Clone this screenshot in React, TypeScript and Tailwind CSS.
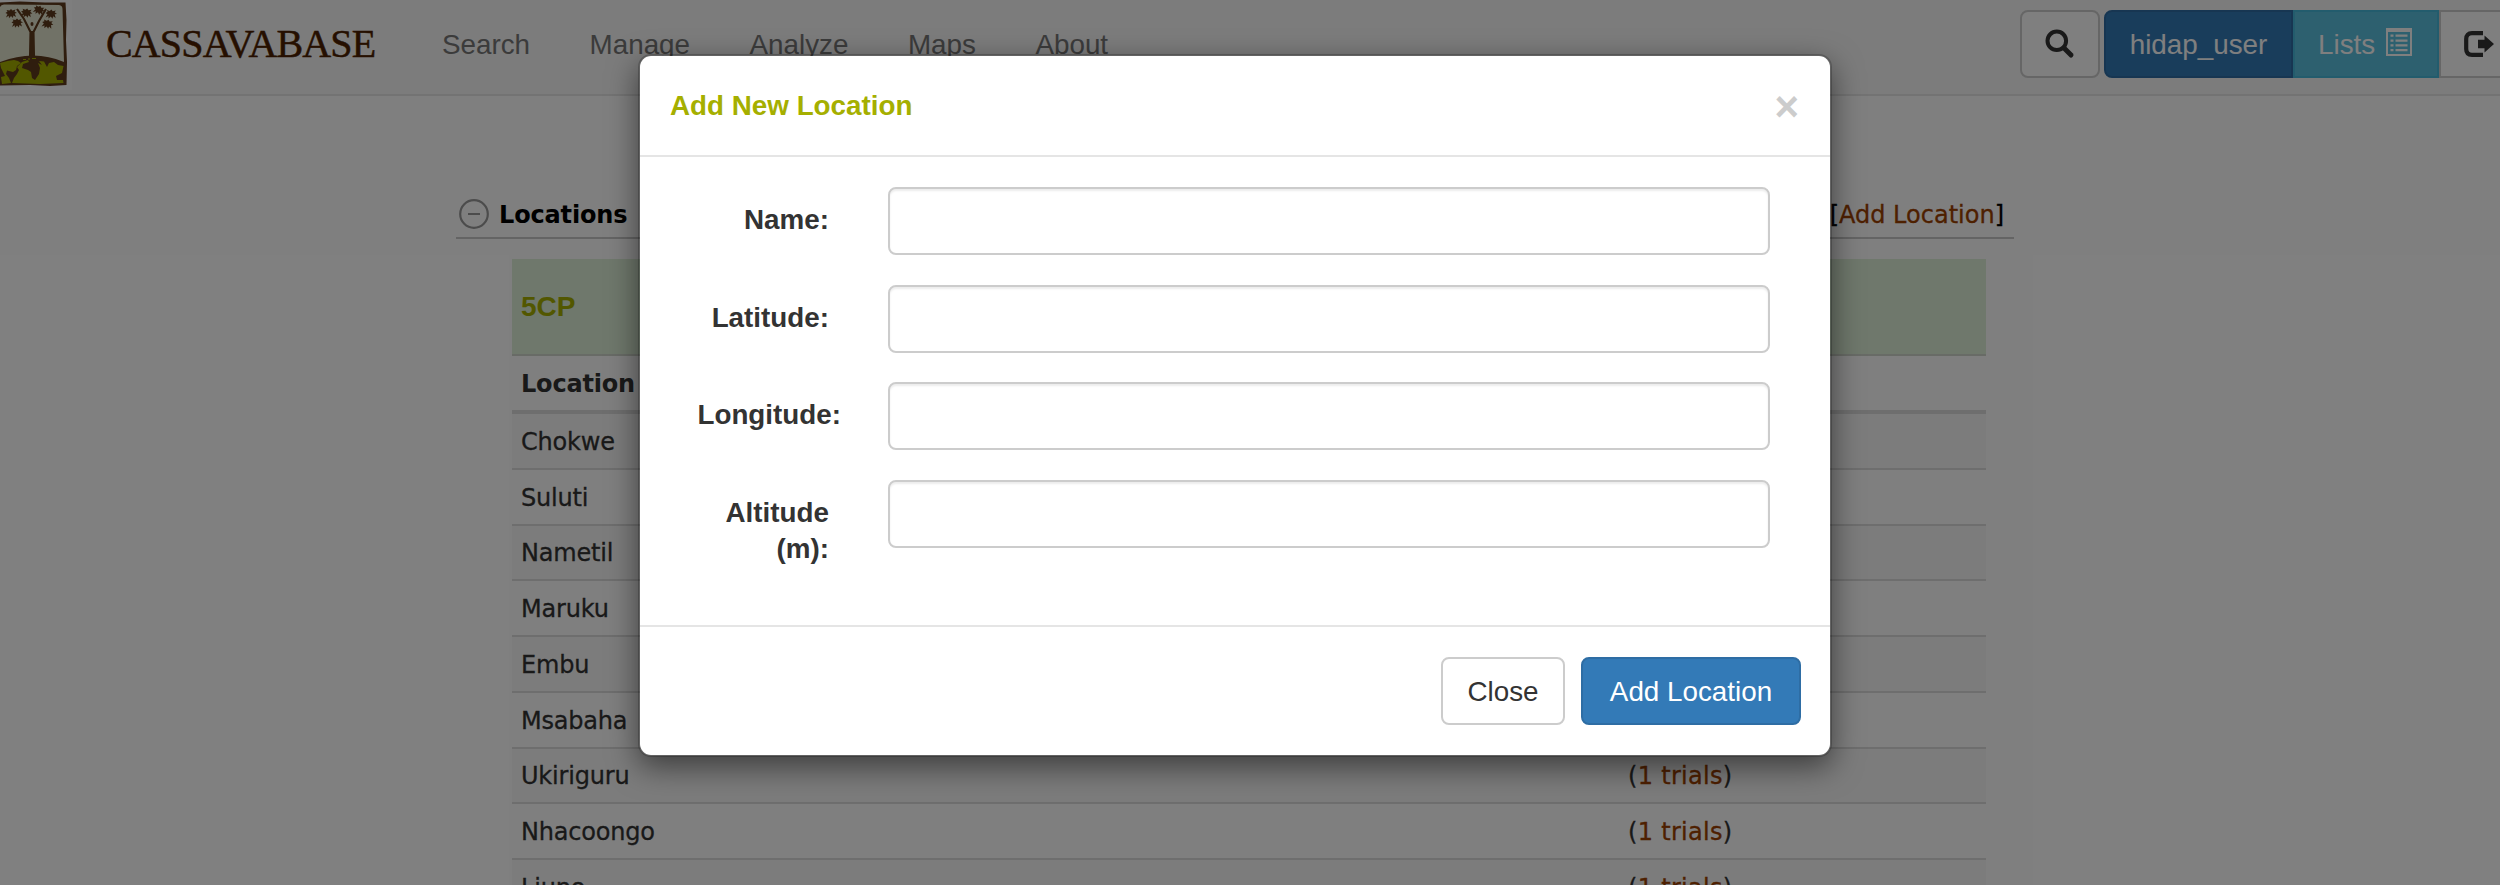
import React from "react";

const rows = ["Chokwe", "Suluti", "Nametil", "Maruku", "Embu", "Msabaha", "Ukiriguru", "Nhacoongo", "Ljupo"];

function Leaf({ x, y, r = 0 }: { x: number; y: number; r?: number }) {
  return (
    <g transform={`translate(${x} ${y}) rotate(${r})`} fill="#5e3a1c">
      <path d="M0 -4 L1.500 -2.500 L4.500 -3.500 L3.500 -1.500 L6 0 L3.800 .5 L5 4 L2.300 2.500 L2 5 L0 3 L-2 5.200 L-2.300 2.800 L-5 4.500 L-3.500 1 L-5.500 0 L-3.500 -1.500 L-4.500 -3 L-1.500 -2.500Z" />
    </g>
  );
}

function Logo() {
  return (
    <svg width="72" height="90" viewBox="0 0 72 90" className="block shrink-0">
      <rect x="0" y="0" width="72" height="90" fill="#fdfdfd" />
      <path d="M-2 2.500 L20 1.500 L45 2.500 L65.500 2.500 L66.500 20 L66 40 L67 62 L66.500 85 L50 86 L30 85 L-2 85.500Z" fill="#5e3a1c" />
      <path d="M0 7 Q1 4.500 4 4.500 L59 5 Q62.500 5.500 62.500 9 L64 62 Q34 49 0 62Z" fill="#e3e4ce" />
      <path d="M0 63 Q8 60.500 14 60 L18 61 L21 63 L17 66 L16 70 L13 72 L7 70.500 L6 74 L9 78 L11 83 L2 84 L1 77 L5 76 L1 68Z" fill="#a5af00" />
      <path d="M17 74 L19 70 L17 67 L22 62 L28 60 L29 62 L23 64 L22 68 L28 70 L31 72 L32 78 L35 80 L39 74 L40 68 L38 63 L42 65 L39 61 L44 61.500 L47 67 L49 63 L54 62 L58 65 L63.500 66 L62 73 L56 76 L57 80 L63 80 L63.500 83 L40 84 L12 83 L14 78Z" fill="#a5af00" />
      <path d="M23 59.500 h3 M28 59 h2 M32 58.500 h4" stroke="#a5af00" strokeWidth="1" />
      <path d="M30 57 L30.500 32 L24 19 L17 9 M34 57 L33.500 32 L39 21 L46 9 M32 57 L32 31" stroke="#5e3a1c" strokeWidth="2.100" fill="none" />
      <ellipse cx="32" cy="24" rx="1.500" ry="2" fill="#5e3a1c" />
      <Leaf x={11} y={13} />
      <Leaf x={26.500} y={12.500} r={10} />
      <Leaf x={39} y={9.500} r={20} />
      <Leaf x={51} y={13.500} r={5} />
      <Leaf x={17} y={22.500} />
      <Leaf x={47.500} y={23.500} r={15} />
    </svg>
  );
}

function SearchIcon() {
  return (
    <svg width="30" height="30" viewBox="0 0 30 30" className="block">
      <circle cx="11.800" cy="11.800" r="9.300" fill="none" stroke="#333" strokeWidth="4" />
      <path d="M19 19 L26 26" stroke="#333" strokeWidth="5" strokeLinecap="round" />
    </svg>
  );
}

function ListIcon() {
  return (
    <svg width="26" height="28" viewBox="0 0 26 28" className="block">
      <path fill="#fff" fillRule="evenodd" d="M0 0H26V28H0Z M2 4V26H24V4Z" />
      <g fill="#fff">
        <path d="M4.500 6.500h3v2.200h-3z M4.500 11.500h3v2.200h-3z M4.500 16.300h3v2.200h-3z M4.500 21.100h3v2.200h-3z" />
        <path d="M9.500 6.500h12v2.200h-12z M9.500 11.500h12v2.200h-12z M9.500 16.300h12v2.200h-12z M9.500 21.100h12v2.200h-12z" />
      </g>
    </svg>
  );
}

function LogoutIcon() {
  return (
    <svg width="30" height="26" viewBox="0 0 30 26" className="block">
      <path d="M19 2.200H8Q2.200 2.200 2.200 8V18Q2.200 23.800 8 23.800H19" fill="none" stroke="#333" strokeWidth="4.200" />
      <path d="M14 8.700H20.500V4.500L30 13L20.500 21.500V17.300H14Z" fill="#333" />
    </svg>
  );
}

function Header() {
  return (
    <header className="flex h-24 w-full items-start overflow-hidden border-b-2 border-[#e7e7e7] bg-[#f8f8f8] font-['Liberation_Sans',sans-serif] text-[27.800px] leading-10 text-[#777]">
      <Logo />
      <div className="ml-[34px] mt-[20px] w-[336px] whitespace-nowrap font-['Liberation_Serif',serif] text-[40px] leading-[48px] tracking-[-0.850px] text-[#4c1f00] [-webkit-text-stroke:0.500px_#4c1f00]">
        CASSAVABASE
      </div>
      <nav className="mt-[25px] flex gap-[59.500px]">
        <span>Search</span>
        <span>Manage</span>
        <span>Analyze</span>
        <span>Maps</span>
        <span>About</span>
      </nav>
      <div className="ml-auto mt-[10px] flex w-[480px] shrink-0">
        <button className="mr-1 flex h-[68px] w-20 shrink-0 items-center justify-center rounded-lg border-2 border-[#ccc] bg-white">
          <SearchIcon />
        </button>
        <button className="h-[68px] w-[189px] shrink-0 rounded-l-lg border-2 border-[#2e6da4] bg-[#337ab7] pt-px text-white">hidap_user</button>
        <button className="flex h-[68px] w-[146px] shrink-0 items-center border-2 border-[#46b8da] bg-[#5bc0de] pl-[23px] text-white">
          <span className="w-[68px] pt-px text-left">Lists</span>
          <span className="-mt-1">
            <ListIcon />
          </span>
        </button>
        <button className="flex h-[68px] w-[80px] shrink-0 items-center rounded-r-lg border-2 border-[#ccc] bg-white pl-[23px]">
          <LogoutIcon />
        </button>
      </div>
    </header>
  );
}

function LocationsPage() {
  return (
    <main className="ml-[456px] w-[1558px] pt-[91px] font-['DejaVu_Sans',sans-serif] text-[24px] leading-[34px] text-[#333]">
      <div className="flex h-[52px] items-start border-b-2 border-[#c8c8c8] text-black">
        <svg width="30" height="30" viewBox="0 0 30 30" className="ml-[3px] mt-3 block">
          <circle cx="15" cy="15" r="13.800" fill="none" stroke="#999" strokeWidth="2.200" />
          <path d="M9 15H21" stroke="#999" strokeWidth="2" />
        </svg>
        <span className="ml-[10px] mt-[11px] font-bold tracking-[-0.150px]">Locations</span>
        <span className="ml-auto mr-[10px] mt-[11px] [-webkit-text-stroke:0.300px]">
          [<span className="text-[#9c4000]">Add Location</span>]
        </span>
      </div>
      <div className="ml-14 mt-5 w-[1474px]">
        <div className="flex h-[97px] items-center border-b-2 border-[#d0d6cc] bg-[#dff0d8] pl-[9px] font-['Liberation_Sans',sans-serif] text-[28px] font-bold text-[#a5af00]">
          5CP
        </div>
        <div className="flex h-[58px] items-center border-b-4 border-[#ddd] pl-[9px] pt-[2px] font-bold tracking-[-0.200px]">Location</div>
        {rows.map((name) => (
          <div key={name} className="flex h-[55.750px] items-center border-b-2 border-[#ddd] pl-[9px] pt-[2px] odd:bg-[#f9f9f9] [-webkit-text-stroke:0.300px]">
            <span className="w-[1107px] tracking-[-0.200px]">{name}</span>
            <span className="tracking-[0.300px]">
              (<span className="text-[#9c4000]">1 trials</span>)
            </span>
          </div>
        ))}
      </div>
    </main>
  );
}

function Field({ label, wide = false }: { label: string; wide?: boolean }) {
  return (
    <div className="flex h-[97.700px] items-start">
      <label className={wide ? "mr-[47px] mt-[15px] w-[161px] shrink-0 text-right font-bold leading-[35.500px]" : "mr-[59px] mt-[15px] w-[149px] shrink-0 pl-6 text-right font-bold leading-[35.500px]"}>
        {label}
      </label>
      <input className="h-[68px] w-[882px] rounded-lg border-2 border-[#ccc] bg-white shadow-[inset_0_2px_2px_rgba(0,0,0,0.075)] outline-none" />
    </div>
  );
}

function AddLocationDialog() {
  return (
    <div className="h-[703px] w-[1194px] rounded-[13px] border-2 border-black/20 bg-white bg-clip-padding font-['Liberation_Sans',sans-serif] text-[27.800px] text-[#333] shadow-[0_10px_30px_rgba(0,0,0,0.5)]">
      <div className="flex h-[101px] items-start justify-between border-b-2 border-[#e5e5e5] pl-[30px] pr-[31px]">
        <h4 className="mt-[30px] font-bold leading-10 text-[#a5af00]">Add New Location</h4>
        <span className="mt-[30px] text-[42px] font-bold leading-[42px] text-[#ccc]">×</span>
      </div>
      <div className="h-[468px] pl-10 pt-[30px]">
        <Field label="Name:" />
        <Field label="Latitude:" />
        <Field label="Longitude:" wide />
        <Field label="Altitude (m):" />
      </div>
      <div className="flex justify-end gap-4 border-t-2 border-[#e5e5e5] pr-[29px] pt-[30px]">
        <button className="h-[68px] w-[124px] rounded-lg border-2 border-[#ccc] bg-white pt-px">Close</button>
        <button className="h-[68px] w-[220px] rounded-lg border-2 border-[#2e6da4] bg-[#337ab7] pt-px text-white">Add Location</button>
      </div>
    </div>
  );
}

export default function App() {
  return (
    <div className="relative h-[885px] w-[2500px] overflow-hidden bg-white">
      <Header />
      <LocationsPage />
      <div className="absolute inset-0 flex items-start bg-black/50 pl-[638px] pt-[54px]">
        <AddLocationDialog />
      </div>
    </div>
  );
}
